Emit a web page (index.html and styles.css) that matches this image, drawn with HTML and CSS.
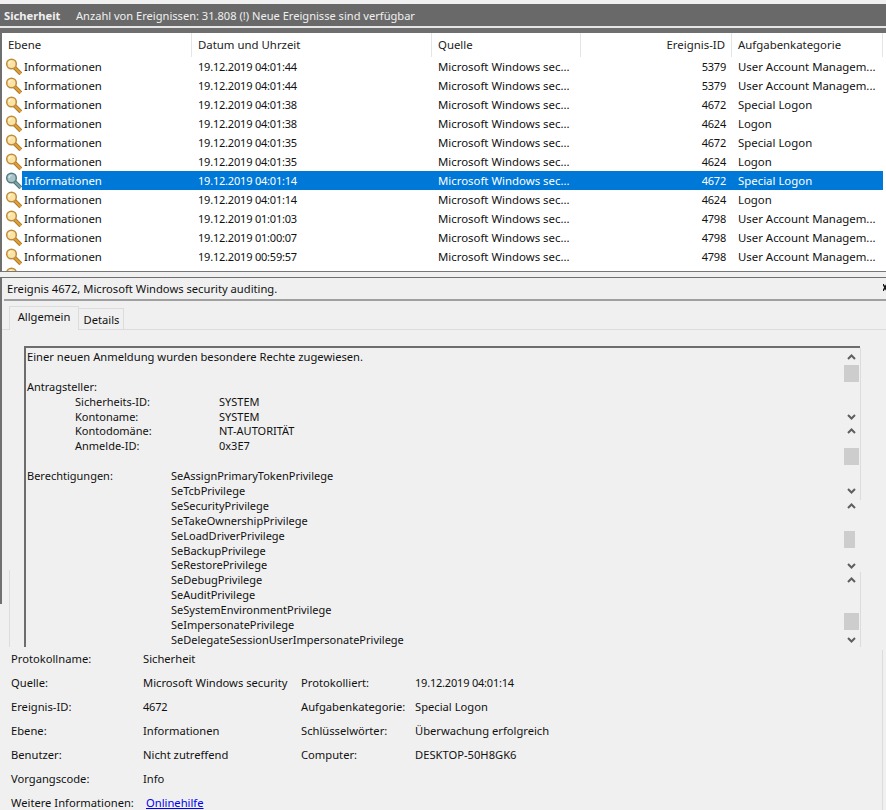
FILE: index.html
```html
<!DOCTYPE html>
<html lang="de">
<head>
    <meta charset="UTF-8">
    <meta name="viewport" content="width=device-width, initial-scale=1.0">
    <title>Sicherheit</title>
    <link rel="stylesheet" href="styles.css">
</head>
<body>
    <svg class="svg-defs" width="0" height="0">
        <symbol id="key" viewBox="0 0 17 17">
            <path d="M8.5 8.5 L15.8 15.8" class="key-edge"/>
            <path d="M8.5 8.5 L15.8 15.8" class="key-shaft"/>
            <circle cx="6.5" cy="6" r="4.8" class="key-bow"/>
            <path d="M4 6 A2.5 2.5 0 0 1 6.5 3.5" class="key-shine"/>
        </symbol>
    </svg>

    <div class="top-gap"></div>
    <div class="log-head">
        <span class="log-name">Sicherheit</span>
        <span class="log-count">Anzahl von Ereignissen: 31.808 (!) Neue Ereignisse sind verfügbar</span>
    </div>
    <div class="head-line"></div>
    <div class="head-shadow"></div>

    <div class="event-list">
        <div class="list-row list-header">
            <div class="col-level">Ebene</div>
            <div class="col-date">Datum und Uhrzeit</div>
            <div class="col-source">Quelle</div>
            <div class="col-id">Ereignis-ID</div>
            <div class="col-task">Aufgabenkategorie</div>
        </div>
        <div class="list-row"><svg class="key"><use href="#key"/></svg><div class="cell">Informationen</div><div class="cell pad-date">19.12.2019 04:01:44</div><div class="cell pad">Microsoft Windows sec...</div><div class="cell num">5379</div><div class="cell pad">User Account Managem...</div></div>
        <div class="list-row"><svg class="key"><use href="#key"/></svg><div class="cell">Informationen</div><div class="cell pad-date">19.12.2019 04:01:44</div><div class="cell pad">Microsoft Windows sec...</div><div class="cell num">5379</div><div class="cell pad">User Account Managem...</div></div>
        <div class="list-row"><svg class="key"><use href="#key"/></svg><div class="cell">Informationen</div><div class="cell pad-date">19.12.2019 04:01:38</div><div class="cell pad">Microsoft Windows sec...</div><div class="cell num">4672</div><div class="cell pad">Special Logon</div></div>
        <div class="list-row"><svg class="key"><use href="#key"/></svg><div class="cell">Informationen</div><div class="cell pad-date">19.12.2019 04:01:38</div><div class="cell pad">Microsoft Windows sec...</div><div class="cell num">4624</div><div class="cell pad">Logon</div></div>
        <div class="list-row"><svg class="key"><use href="#key"/></svg><div class="cell">Informationen</div><div class="cell pad-date">19.12.2019 04:01:35</div><div class="cell pad">Microsoft Windows sec...</div><div class="cell num">4672</div><div class="cell pad">Special Logon</div></div>
        <div class="list-row"><svg class="key"><use href="#key"/></svg><div class="cell">Informationen</div><div class="cell pad-date">19.12.2019 04:01:35</div><div class="cell pad">Microsoft Windows sec...</div><div class="cell num">4624</div><div class="cell pad">Logon</div></div>
        <div class="list-row selected"><svg class="key"><use href="#key"/></svg><div class="cell">Informationen</div><div class="cell pad-date">19.12.2019 04:01:14</div><div class="cell pad">Microsoft Windows sec...</div><div class="cell num">4672</div><div class="cell pad">Special Logon</div></div>
        <div class="list-row"><svg class="key"><use href="#key"/></svg><div class="cell">Informationen</div><div class="cell pad-date">19.12.2019 04:01:14</div><div class="cell pad">Microsoft Windows sec...</div><div class="cell num">4624</div><div class="cell pad">Logon</div></div>
        <div class="list-row"><svg class="key"><use href="#key"/></svg><div class="cell">Informationen</div><div class="cell pad-date">19.12.2019 01:01:03</div><div class="cell pad">Microsoft Windows sec...</div><div class="cell num">4798</div><div class="cell pad">User Account Managem...</div></div>
        <div class="list-row"><svg class="key"><use href="#key"/></svg><div class="cell">Informationen</div><div class="cell pad-date">19.12.2019 01:00:07</div><div class="cell pad">Microsoft Windows sec...</div><div class="cell num">4798</div><div class="cell pad">User Account Managem...</div></div>
        <div class="list-row"><svg class="key"><use href="#key"/></svg><div class="cell">Informationen</div><div class="cell pad-date">19.12.2019 00:59:57</div><div class="cell pad">Microsoft Windows sec...</div><div class="cell num">4798</div><div class="cell pad">User Account Managem...</div></div>
        <div class="list-row"><svg class="key"><use href="#key"/></svg></div>
    </div>

    <div class="split-gap"></div>

    <div class="detail-pane">
        <div class="detail-title">
            <span>Ereignis 4672, Microsoft Windows security auditing.</span>
            <svg class="close-mark" viewBox="0 0 3 7"><path d="M0 0 L4 7 M4 0 L0 7"/></svg>
        </div>
        <div class="detail-sep"></div>

        <div class="tabs">
            <div class="tab active">Allgemein</div>
            <div class="tab">Details</div>
        </div>

        <div class="message-box">
            <div class="msg-line msg-intro">Einer neuen Anmeldung wurden besondere Rechte zugewiesen.</div>
            <div class="msg-line"></div>
            <div class="msg-line">Antragsteller:</div>
            <div class="msg-pair"><span>Sicherheits-ID:</span><span>SYSTEM</span></div>
            <div class="msg-pair"><span>Kontoname:</span><span>SYSTEM</span></div>
            <div class="msg-pair"><span>Kontodomäne:</span><span>NT-AUTORITÄT</span></div>
            <div class="msg-pair"><span>Anmelde-ID:</span><span>0x3E7</span></div>
            <div class="msg-line"></div>
            <div class="msg-priv"><span>Berechtigungen:</span><span>SeAssignPrimaryTokenPrivilege</span></div>
            <div class="msg-priv"><span></span><span>SeTcbPrivilege</span></div>
            <div class="msg-priv"><span></span><span>SeSecurityPrivilege</span></div>
            <div class="msg-priv"><span></span><span>SeTakeOwnershipPrivilege</span></div>
            <div class="msg-priv"><span></span><span>SeLoadDriverPrivilege</span></div>
            <div class="msg-priv"><span></span><span>SeBackupPrivilege</span></div>
            <div class="msg-priv"><span></span><span>SeRestorePrivilege</span></div>
            <div class="msg-priv"><span></span><span>SeDebugPrivilege</span></div>
            <div class="msg-priv"><span></span><span>SeAuditPrivilege</span></div>
            <div class="msg-priv"><span></span><span>SeSystemEnvironmentPrivilege</span></div>
            <div class="msg-priv"><span></span><span>SeImpersonatePrivilege</span></div>
            <div class="msg-priv"><span></span><span>SeDelegateSessionUserImpersonatePrivilege</span></div>

            <div class="scroll-stack">
                <div class="scrollbar">
                    <svg class="chevron" viewBox="0 0 9 8"><path d="M1 6 L4.5 2.5 L8 6"/></svg>
                    <div class="thumb thumb-1"></div>
                    <svg class="chevron chevron-down" viewBox="0 0 9 8"><path d="M1 2 L4.5 5.5 L8 2"/></svg>
                </div>
                <div class="scrollbar">
                    <svg class="chevron" viewBox="0 0 9 8"><path d="M1 6 L4.5 2.5 L8 6"/></svg>
                    <div class="thumb thumb-2"></div>
                    <svg class="chevron chevron-down" viewBox="0 0 9 8"><path d="M1 2 L4.5 5.5 L8 2"/></svg>
                </div>
                <div class="scrollbar">
                    <svg class="chevron" viewBox="0 0 9 8"><path d="M1 6 L4.5 2.5 L8 6"/></svg>
                    <div class="thumb thumb-3"></div>
                    <svg class="chevron chevron-down" viewBox="0 0 9 8"><path d="M1 2 L4.5 5.5 L8 2"/></svg>
                </div>
                <div class="scrollbar">
                    <svg class="chevron" viewBox="0 0 9 8"><path d="M1 6 L4.5 2.5 L8 6"/></svg>
                    <div class="thumb thumb-4"></div>
                    <svg class="chevron chevron-down" viewBox="0 0 9 8"><path d="M1 2 L4.5 5.5 L8 2"/></svg>
                </div>
            </div>
            <div class="box-edge"></div>
        </div>

        <div class="props">
            <div>Protokollname:</div><div>Sicherheit</div><div></div><div></div>
            <div>Quelle:</div><div>Microsoft Windows security</div><div>Protokolliert:</div><div class="digits">19.12.2019 04:01:14</div>
            <div>Ereignis-ID:</div><div class="digits">4672</div><div>Aufgabenkategorie:</div><div>Special Logon</div>
            <div>Ebene:</div><div>Informationen</div><div>Schlüsselwörter:</div><div>Überwachung erfolgreich</div>
            <div>Benutzer:</div><div>Nicht zutreffend</div><div>Computer:</div><div>DESKTOP-50H8GK6</div>
            <div>Vorgangscode:</div><div>Info</div><div></div><div></div>
            <div>Weitere Informationen:</div><div><a class="help-link" href="#">Onlinehilfe</a></div><div></div><div></div>
        </div>
    </div>
</body>
</html>
```

FILE: styles.css
```css
body {
    margin: 0;
    height: 810px;
    overflow: hidden;
    background: #f0f0f0;
    color: #111;
    font-family: "Noto Sans", "Open Sans", sans-serif;
    font-size: 11.2px;
}
.svg-defs {
    display: block;
    height: 0;
}
.top-gap {
    height: 4px;
}
.log-head {
    height: 22px;
    background: #696969;
    color: #f0f0f0;
    display: flex;
    align-items: center;
}
.log-name {
    font-weight: bold;
    width: 72px;
    margin-left: 4px;
}
.log-count {
    font-size: 11.1px;
}
.head-line {
    height: 2px;
    background: #e6e6e6;
}
.head-shadow {
    height: 5px;
    background: #6f6f6f;
}

/* event list */
.event-list {
    height: 238px;
    overflow: hidden;
    background: #fff;
    border-left: 2px solid #6f6f6f;
    border-bottom: 1px solid #777;
    font-size: 11.4px;
}
.list-row {
    --key-edge: #a9772f;
    --key-shaft: #e0a033;
    --key-bow: #fbe3a6;
    --key-ring: #bf8c3a;
    --key-shine: #fff6dc;
    display: grid;
    grid-template-columns: 20px 169px 241px 149px 151px 151px;
    height: 19px;
    line-height: 19px;
    white-space: nowrap;
}
.list-row.selected {
    --key-edge: #4f7379;
    --key-shaft: #7da2a8;
    --key-bow: #a9c5ca;
    --key-ring: #557a80;
    --key-shine: #dbe8ea;
}
.list-header {
    grid-template-columns: 190px 240px 149px 151px 151px;
    height: 24px;
    line-height: 24px;
    color: #222;
}
.list-header > div {
    border-right: 1px solid #e5e5e5;
    padding-left: 6px;
}
.list-header .col-id {
    padding-left: 0;
    padding-right: 6px;
    text-align: right;
}
.key {
    width: 17px;
    height: 17px;
    margin: 0 0 0 3px;
    align-self: center;
}
.key-edge {
    stroke: var(--key-edge);
    stroke-width: 4;
    fill: none;
}
.key-shaft {
    stroke: var(--key-shaft);
    stroke-width: 2.2;
    fill: none;
}
.key-bow {
    fill: var(--key-bow);
    stroke: var(--key-ring);
    stroke-width: 1.5;
}
.key-shine {
    stroke: var(--key-shine);
    stroke-width: 1.2;
    fill: none;
}
.cell {
    padding-left: 2px;
}
.cell.pad-date {
    padding-left: 7px;
    font-size: 11px;
    letter-spacing: -0.2px;
}
.cell.pad {
    padding-left: 6px;
}
.cell.num {
    padding-right: 6px;
    text-align: right;
    font-size: 11px;
    letter-spacing: -0.2px;
}
.selected .cell {
    background: #0078d7;
    color: #fff;
}
.split-gap {
    height: 5px;
}

/* detail pane */
.detail-pane {
    border-top: 1px solid #6f6f6f;
    position: relative;
}
.detail-pane::before {
    content: "";
    position: absolute;
    left: 0;
    top: 0;
    width: 2px;
    height: 326px;
    background: #707070;
}
.detail-pane::after {
    content: "";
    position: absolute;
    left: 882px;
    top: 372px;
    width: 1px;
    height: 160px;
    background: #dcdcdc;
}
.detail-title {
    height: 21px;
    line-height: 21px;
    padding-left: 7px;
    display: flex;
    justify-content: space-between;
}
.close-mark {
    width: 3px;
    height: 7px;
    margin-top: 6px;
}
.close-mark path {
    stroke: #111;
    stroke-width: 1.4;
    fill: none;
}
.detail-sep {
    height: 2px;
    margin-left: 4px;
    background: #a0a0a0;
}
.tabs {
    display: flex;
    align-items: flex-end;
    height: 23px;
    margin-top: 6px;
    padding-left: 9px;
    border-bottom: 1px solid #dcdcdc;
    box-sizing: border-box;
}
.tab {
    width: 43px;
    height: 20px;
    line-height: 21px;
    padding-left: 1px;
    box-sizing: content-box;
    text-align: center;
    border: 1px solid #dcdcdc;
    border-bottom: 0;
    border-left: 0;
}
.tab.active {
    width: 68px;
    height: 23px;
    padding-left: 0;
    line-height: 20px;
    border-left: 1px solid #dcdcdc;
    background: #f0f0f0;
    margin-bottom: -1px;
}
.message-box {
    width: 834px;
    height: 299px;
    margin: 16px 0 0 24px;
    border-top: 2px solid #6d6d6d;
    border-left: 2px solid #6d6d6d;
    position: relative;
    font-size: 11px;
}
.message-box::before {
    content: "";
    position: absolute;
    left: -17px;
    top: 222px;
    width: 1px;
    height: 77px;
    background: #dcdcdc;
}
.msg-line,
.msg-pair,
.msg-priv {
    height: 14.9px;
    line-height: 14.9px;
    padding-left: 1px;
    white-space: nowrap;
}
.msg-intro {
    margin-top: 2px;
    font-size: 11.2px;
}
.msg-pair {
    display: grid;
    grid-template-columns: 144px auto;
    padding-left: 49px;
}
.msg-priv {
    display: grid;
    grid-template-columns: 144px auto;
}
.scroll-stack {
    position: absolute;
    top: 5px;
    right: 1px;
    width: 15px;
    display: flex;
    flex-direction: column;
    gap: 6.3px;
}
.scrollbar {
    height: 68px;
    display: flex;
    flex-direction: column;
    align-items: flex-start;
}
.chevron {
    width: 9px;
    height: 8px;
    margin-left: 3px;
    flex: none;
}
.chevron path {
    fill: none;
    stroke: #5f5f5f;
    stroke-width: 2;
}
.chevron-down {
    margin-top: auto;
}
.thumb {
    width: 15px;
    height: 17px;
    background: #cdcdcd;
}
.thumb-1 {
    margin-top: 4px;
}
.thumb-2 {
    margin-top: 13px;
}
.thumb-3 {
    margin-top: 21px;
    width: 11px;
}
.thumb-4 {
    margin-top: 29px;
}
.box-edge {
    position: absolute;
    top: 0;
    bottom: 0;
    right: -1px;
    width: 1px;
    background: linear-gradient(#dcdcdc 0, #dcdcdc 51%, #f0f0f0 51%, #f0f0f0 75%, #dcdcdc 75%);
}

/* properties under the message */
.props {
    display: grid;
    grid-template-columns: 132px 158px 114px auto;
    grid-auto-rows: 24px;
    line-height: 24px;
    padding-left: 11px;
    white-space: nowrap;
}
.digits {
    font-size: 11px;
    letter-spacing: -0.2px;
}
.help-link {
    color: #0000ee;
    margin-left: 3px;
}
```
